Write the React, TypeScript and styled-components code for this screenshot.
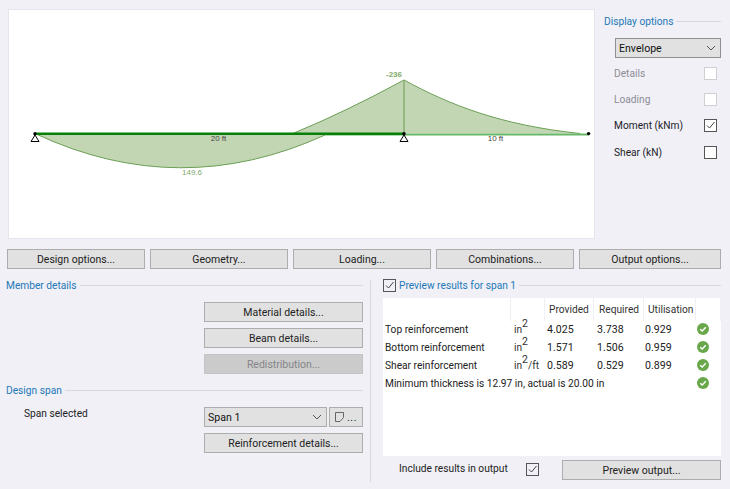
import React from "react";
import styled, { createGlobalStyle } from "styled-components";

const Global = createGlobalStyle`
  html, body { margin: 0; padding: 0; background: #f0f0f6; }
  body { font-family: Roboto, Lato, "Liberation Sans", sans-serif; font-size: 10.2px; color: #222; }
  * { box-sizing: border-box; }
`;

const Page = styled.div`
  width: 730px; height: 489px; overflow: hidden; background: #f0f0f6;
  padding: 9px 9px 0 7px; display: flex; flex-direction: column;
`;
const TopRow = styled.div`display: flex; height: 230px; padding-left: 1px;`;
const Canvas = styled.div`
  width: 587px; height: 230px; background: #fff; border: 1px solid #e6e6ee; flex: none;
`;
const ChartSvg = styled.svg`display: block;`;
const Side = styled.div`flex: 1; padding: 5px 0 0 9px; display: flex; flex-direction: column;`;
const Heading = styled.div`
  display: flex; align-items: center; gap: 3px; color: #2478b8; height: 14px; white-space: nowrap;
  &::after { content: ""; flex: 1; height: 1px; background: #d8d8de; }
`;
const DisplaySelect = styled.div`margin: 10px 0 0 11px;`;
const SelectBox = styled.div<{ $dark?: boolean; $w: number }>`
  width: ${p => p.$w}px; height: 20px; background: #e1e1e1; border: 1px solid ${p => (p.$dark ? "#8f8f8f" : "#adadad")};
  display: flex; align-items: center; justify-content: space-between; padding: 0 4px 0 3px; color: #111; font-size: 10.6px;
`;
const OptionRow = styled.div<{ $disabled?: boolean }>`
  height: 26.4px; display: flex; align-items: center; justify-content: space-between;
  padding: 0 4px 0 10px; color: ${p => (p.$disabled ? "#8d8d96" : "#1c1c28")};
`;
const Options = styled.div`margin-top: 2px;`;
const Check = styled.span<{ $disabled?: boolean }>`
  width: 13px; height: 13px; flex: none; display: inline-flex; align-items: center; justify-content: center;
  background: #fff; border: 1px solid ${p => (p.$disabled ? "#cfcfd4" : "#555")};
`;
const ButtonRow = styled.div`display: flex; gap: 5px; margin-top: 10px;`;
const Btn = styled.div<{ $w: number; $disabled?: boolean }>`
  width: ${p => p.$w}px; height: 20px; flex: none; display: flex; align-items: center; justify-content: center;
  background: ${p => (p.$disabled ? "#cbcbcb" : "#e1e1e1")}; border: 1px solid ${p => (p.$disabled ? "#c4c4c4" : "#adadad")};
  color: ${p => (p.$disabled ? "#85858a" : "#222")}; white-space: nowrap; font-size: 10.5px;
`;
const Bottom = styled.div`display: flex; flex: 1; margin-top: 9px;`;
const LeftCol = styled.div`width: 357px; margin-left: -1px; flex: none; display: flex; flex-direction: column;`;
const Divider = styled.div`width: 1px; height: 202px; background: #d8d8de; margin: 2px 0 0 7px; flex: none;`;
const RightCol = styled.div`width: 338px; margin-left: 12px; flex: none; display: flex; flex-direction: column;`;
const ButtonStack = styled.div`display: flex; flex-direction: column; align-items: flex-end; gap: 6px; margin: 10px 0 9px;`;
const SpanArea = styled.div`display: flex; justify-content: space-between; margin-top: 10px; padding-left: 18px;`;
const SpanLabel = styled.div`padding-top: 1px;`;
const SpanControls = styled.div`display: flex; flex-direction: column; gap: 6px; width: 159px;`;
const SelectLine = styled.div`display: flex; justify-content: space-between;`;
const NoteBtn = styled(Btn)`gap: 3px; letter-spacing: .5px;`;
const PreviewCheck = styled(Check)`background: #f0f0f6;`;
const Table = styled.div`
  height: 158px; margin-top: 6px; background: #fff; display: grid;
  grid-template-columns: 128px 34px 49px 50px 52px 25px; grid-auto-rows: 18px; grid-template-rows: 23px;
  align-content: start;
`;
const Head = styled.div<{ $pad?: number }>`
  display: flex; align-items: center; padding-left: ${p => p.$pad ?? 5}px; border-right: 1px solid #f0f0f4; color: #333;
`;
const Cell = styled.div<{ $span?: number; $pad?: number }>`
  display: flex; align-items: center; white-space: nowrap; padding-left: ${p => p.$pad ?? 2}px;
  ${p => (p.$span ? `grid-column: span ${p.$span};` : "")} color: #222; position: relative; top: -1px;
`;
const NumCell = styled(Cell)`font-size: 10.6px;`;
const Sup = styled.sup`font-size: 10.5px; line-height: 0; position: relative; top: -1px; vertical-align: super;`;
const Unit = styled.span`color: #333;`;
const OkCell = styled.div`display: flex; align-items: center; padding-left: 1px; position: relative; top: -1px;`;
const Footer = styled.div`display: flex; align-items: center; margin-top: 4px; padding-left: 16px;`;
const FooterLabel = styled.span`width: 127px; white-space: nowrap; position: relative; top: -2px;`;
const FooterCheck = styled(Check)`background: #f0f0f6; position: relative; top: -1px;`;
const FooterBtn = styled(Btn)`margin-left: 23px;`;

const Tick = () => (
  <svg width="11" height="11" viewBox="0 0 11 11"><path d="M2 5.5 L4.5 8 L9.5 2" fill="none" stroke="#444" strokeWidth="1" /></svg>
);
const Chevron = () => (
  <svg width="10" height="6" viewBox="0 0 10 6"><path d="M1 1 L5 5 L9 1" fill="none" stroke="#555" strokeWidth="1" /></svg>
);
const Ok = () => (
  <svg width="12" height="12" viewBox="0 0 12 12">
    <circle cx="6" cy="6" r="6" fill="#69a84a" />
    <path d="M3.2 6.2 L5.2 8 L8.8 4.2" fill="none" stroke="#fff" strokeWidth="1.5" />
  </svg>
);
const Note = () => (
  <svg width="9" height="10" viewBox="0 0 9 10"><path d="M.5 .5 H8.5 V5.5 L5 9.5 H.5 Z" fill="none" stroke="#666" strokeWidth="1" /></svg>
);

const Support = ({ x }: { x: number }) => (
  <g>
    <path d={`M${x} 135 L${x - 4} 141.5 H${x + 4} Z`} fill="#fff" stroke="#000" strokeWidth="1" />
    <circle cx={x} cy={133.8} r="1.7" fill="#000" />
  </g>
);

const Chart = () => (
  <ChartSvg width="585" height="228" viewBox="9 10 585 228" fontFamily="'Liberation Sans', sans-serif">
    <path d="M36 134 Q180 201 325 135 Z" fill="#c3d6b4" />
    <path d="M294 133 Q345 112 404 80 C450 105 500 125 580 133.5 Z" fill="#c3d6b4" />
    <path d="M36 134 Q180 201 325 135" fill="none" stroke="#6b9f55" strokeWidth="1" />
    <path d="M294 133 Q345 112 404 80 C450 105 500 125 580 133.5" fill="none" stroke="#6b9f55" strokeWidth="1" />
    <path d="M404 80 V134" stroke="#84ad6e" strokeWidth="1.4" />
    <path d="M325 134.4 H589" stroke="#68b868" strokeWidth="2" />
    <path d="M36 133.8 H404" stroke="#078007" strokeWidth="2.4" />
    <Support x={35} />
    <Support x={404} />
    <circle cx="588.6" cy="133.6" r="1.7" fill="#000" />
    <text x="218.5" y="141" fontSize="8" fill="#444" textAnchor="middle">20 ft</text>
    <text x="495.5" y="141" fontSize="8" fill="#444" textAnchor="middle">10 ft</text>
    <text x="192" y="175" fontSize="8" fill="#7fa96a" textAnchor="middle">149.6</text>
    <text x="394" y="76.5" fontSize="8" fontWeight="700" fill="#7fa96a" textAnchor="middle">-236</text>
  </ChartSvg>
);

const rows = [
  { name: "Top reinforcement", unit: "", p: "4.025", r: "3.738", u: "0.929" },
  { name: "Bottom reinforcement", unit: "", p: "1.571", r: "1.506", u: "0.959" },
  { name: "Shear reinforcement", unit: "/ft", p: "0.589", r: "0.529", u: "0.899" },
];

export default function App() {
  return (
    <Page>
      <Global />
      <TopRow>
        <Canvas><Chart /></Canvas>
        <Side>
          <Heading>Display options</Heading>
          <DisplaySelect>
            <SelectBox $dark $w={106}>Envelope<Chevron /></SelectBox>
          </DisplaySelect>
          <Options>
            <OptionRow $disabled>Details<Check $disabled /></OptionRow>
            <OptionRow $disabled>Loading<Check $disabled /></OptionRow>
            <OptionRow>Moment (kNm)<Check><Tick /></Check></OptionRow>
            <OptionRow>Shear (kN)<Check /></OptionRow>
          </Options>
        </Side>
      </TopRow>
      <ButtonRow>
        <Btn $w={138}>Design options...</Btn>
        <Btn $w={138}>Geometry...</Btn>
        <Btn $w={138}>Loading...</Btn>
        <Btn $w={138}>Combinations...</Btn>
        <Btn $w={142}>Output options...</Btn>
      </ButtonRow>
      <Bottom>
        <LeftCol>
          <Heading>Member details</Heading>
          <ButtonStack>
            <Btn $w={159}>Material details...</Btn>
            <Btn $w={159}>Beam details...</Btn>
            <Btn $w={159} $disabled>Redistribution...</Btn>
          </ButtonStack>
          <Heading>Design span</Heading>
          <SpanArea>
            <SpanLabel>Span selected</SpanLabel>
            <SpanControls>
              <SelectLine>
                <SelectBox $w={123}>Span 1<Chevron /></SelectBox>
                <NoteBtn $w={34}><Note />...</NoteBtn>
              </SelectLine>
              <Btn $w={159}>Reinforcement details...</Btn>
            </SpanControls>
          </SpanArea>
        </LeftCol>
        <Divider />
        <RightCol>
          <Heading><PreviewCheck><Tick /></PreviewCheck>Preview results for span 1</Heading>
          <Table>
            <Head />
            <Head />
            <Head $pad={4}>Provided</Head>
            <Head $pad={5}>Required</Head>
            <Head $pad={4}>Utilisation</Head>
            <Head />
            {rows.map(row => (
              <React.Fragment key={row.name}>
                <Cell>{row.name}</Cell>
                <Cell $pad={3}><Unit>in<Sup>2</Sup>{row.unit}</Unit></Cell>
                <NumCell $pad={2}>{row.p}</NumCell>
                <NumCell $pad={3}>{row.r}</NumCell>
                <NumCell $pad={1}>{row.u}</NumCell>
                <OkCell><Ok /></OkCell>
              </React.Fragment>
            ))}
            <Cell $span={5}>Minimum thickness is 12.97 in, actual is 20.00 in</Cell>
            <OkCell><Ok /></OkCell>
          </Table>
          <Footer>
            <FooterLabel>Include results in output</FooterLabel>
            <FooterCheck><Tick /></FooterCheck>
            <FooterBtn $w={159}>Preview output...</FooterBtn>
          </Footer>
        </RightCol>
      </Bottom>
    </Page>
  );
}
